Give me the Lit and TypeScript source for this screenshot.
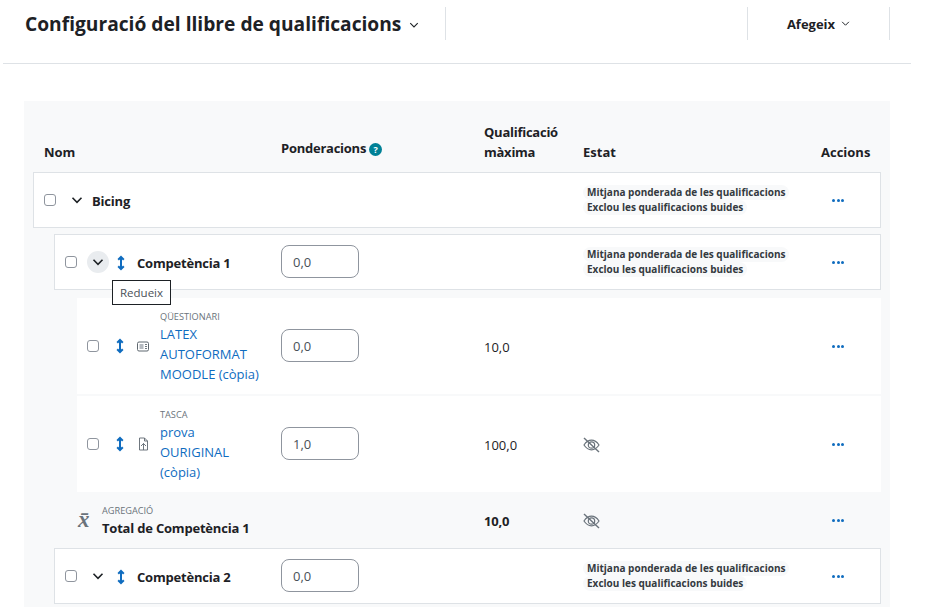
import { LitElement, html, css, svg } from "lit";
import { customElement } from "lit/decorators.js";

const chevron = (size: number, width = 1.6) => html`<svg class="chev" width=${size} height=${size} viewBox="0 0 12 12" fill="none" stroke="currentColor" stroke-width=${width}><path d="M1.5 3.8 6 8.3l4.5-4.5"/></svg>`;

const moveIcon = html`<svg class="move" width="16" height="16" viewBox="0 0 16 16" fill="none" stroke="#0f6cbf" stroke-width="2"><path d="M8 2.500v11M5.200 4.800 8 2l2.800 2.800M5.200 11.200 8 14l2.800-2.800"/></svg>`;

const eyeSlash = html`<svg width="17" height="16" viewBox="0 0 17 16" fill="none" stroke="#6a737b" stroke-width="1.2"><path d="M1 8c2-3 4.500-4.800 7.500-4.800S14 5 16 8c-2 3-4.500 4.800-7.500 4.800S3 11 1 8z"/><circle cx="8.500" cy="8" r="3.200"/><path d="M1 1 16 15" stroke-width="1.400"/></svg>`;

const quizIcon = html`<svg width="12" height="11" viewBox="0 0 12 11" fill="none" stroke="#5f6870"><rect x=".5" y="1" width="11" height="9" rx="1.500"/>${svg`<path d="M2.500 3h4v5h-4z" fill="#b5bac0" stroke="none"/><path d="M8 3.500h2M8 5.500h2M8 7.500h2" stroke-width=".9"/>`}</svg>`;

const assignIcon = html`<svg width="11" height="14" viewBox="0 0 11 14" fill="none" stroke="#5f6870" stroke-width=".9"><path d="M1.500 1h5l3 3v9h-8zM6.500 1v3h3M5.500 13V6.500M3 9l2.500-2.500L8 9"/></svg>`;

const pills = html`<div class="pills"><span>Mitjana ponderada de les qualificacions</span><span>Exclou les qualificacions buides</span></div>`;

@customElement("app-root")
export class AppRoot extends LitElement {
  static styles = css`
    :host {
      display: flex;
      flex-direction: column;
      height: 100vh;
      overflow: hidden;
      background: #fff;
      color: #1d2125;
      font-family: "Open Sans", "Noto Sans", sans-serif;
      font-size: 13px;
    }
    .top {
      display: flex;
      flex: none;
      align-items: center;
      height: 47px;
      margin: 0 14px 0 3px;
      padding: 0 21px 16px 22px;
      border-bottom: 1px solid #dee2e6;
    }
    .title {
      font-size: 19.200px;
      font-weight: 700;
      white-space: nowrap;
    }
    .title-chev {
      margin-left: 8px;
      margin-top: 3px;
    }
    .title-wrap {
      display: flex;
      align-items: center;
      width: 420px;
      height: 33px;
      border-right: 1px solid #dee2e6;
    }
    .add {
      display: flex;
      align-items: center;
      justify-content: center;
      gap: 6px;
      width: 141px;
      height: 33px;
      margin-left: auto;
      border-left: 1px solid #dee2e6;
      border-right: 1px solid #dee2e6;
      font-weight: 700;
      font-size: 13px;
    }
    .panel {
      flex: 1;
      min-height: 0;
      margin: 37px 35px 0 24px;
      padding: 21px 9px 0;
      background: #f8f9fa;
    }
    .row {
      display: grid;
      grid-template-columns: 1fr 203px 99px 238px 60px;
      align-items: center;
    }
    .head {
      align-items: end;
      padding: 0 0 10px 11px;
      font-weight: 700;
      line-height: 20px;
    }
    .head .weight {
      display: flex;
      align-items: center;
      gap: 3px;
      margin-bottom: 4px;
      letter-spacing: -0.25px;
    }
    .head .max {
      letter-spacing: -0.25px;
    }
    .help {
      display: inline-block;
      width: 13px;
      height: 13px;
      margin-top: 3px;
      border-radius: 50%;
      background: #008196;
      color: #fff;
      font-size: 9px;
      font-weight: 700;
      line-height: 13px;
      text-align: center;
    }
    .box {
      height: 56px;
      margin-bottom: 6px;
      background: #fff;
      box-shadow: inset 0 0 0 1px #dee2e6;
    }
    .lvl2 {
      margin-left: 21px;
    }
    .items {
      margin: 8px 0 0 44px;
    }
    .item {
      height: 96px;
      margin-bottom: 2px;
      background: #fff;
    }
    .item.end {
      margin-bottom: 0;
    }
    .agg {
      height: 56px;
      margin-left: 44px;
    }
    .name {
      display: flex;
      align-items: center;
      padding-left: 11px;
    }
    .item .name {
      padding-left: 10px;
    }
    .cb {
      flex: none;
      width: 12px;
      height: 12px;
      border: 1px solid #8f959e;
      border-radius: 3px;
      box-sizing: border-box;
      background: #fff;
    }
    .toggle {
      position: relative;
      display: flex;
      flex: none;
      align-items: center;
      justify-content: center;
      width: 22px;
      height: 22px;
      margin-left: 10px;
      border-radius: 50%;
    }
    .toggle.on {
      background: #e9ecef;
    }
    .tip {
      position: absolute;
      top: 29px;
      left: 25px;
      padding: 0 7px;
      border: 1px solid #1d2125;
      background: #fff;
      color: #495057;
      font-size: 11.500px;
      line-height: 23px;
      white-space: nowrap;
    }
    .move {
      flex: none;
      margin-top: 2px;
    }
    .box .move {
      margin-left: 4px;
    }
    .item .move {
      margin-left: 13px;
      margin-top: 0;
    }
    .bold {
      font-weight: 700;
      letter-spacing: -0.2px;
    }
    .cat-name {
      margin-left: 4px;
      padding-top: 2px;
    }
    .box .sub {
      margin-left: 8px;
      padding-top: 2px;
    }
    .kind {
      display: flex;
      flex: none;
      justify-content: center;
      width: 12px;
      margin-left: 9px;
    }
    .text {
      margin-left: 11px;
      width: 106px;
      padding-top: 2px;
    }
    .label {
      color: #6a737b;
      font-size: 9.200px;
      line-height: 14px;
      text-transform: uppercase;
    }
    a {
      display: block;
      color: #0f6cbf;
      line-height: 20px;
      text-decoration: none;
    }
    .value {
      padding-top: 2px;
    }
    input {
      display: block;
      width: 78px;
      height: 33px;
      margin-bottom: 2px;
      padding: 2px 11px 0;
      border: 1px solid #8f959e;
      border-radius: 8px;
      box-sizing: border-box;
      color: #495057;
      background: #fff;
      font: inherit;
      outline: none;
    }
    .xbar {
      width: 14px;
      margin-left: -10px;
      color: #6a737b;
      font-family: "Liberation Serif", serif;
      font-size: 23px;
      font-style: italic;
      font-weight: 700;
    }
    .agg .label {
      line-height: 15px;
    }
    .agg .text {
      width: auto;
      margin-left: 10px;
      white-space: nowrap;
    }
    .agg .text .bold {
      line-height: 21px;
    }
    .pills {
      display: flex;
      flex-direction: column;
      align-items: flex-start;
      margin-top: -1px;
      color: #343a40;
      font-size: 10px;
      font-weight: 700;
      line-height: 15px;
    }
    .pills span {
      padding: 0 4px;
      border-radius: 8px;
      background: #f8f9fa;
    }
    .eye {
      display: flex;
      padding-top: 2px;
    }
    .dots {
      display: flex;
      gap: 1.500px;
      margin-left: 11px;
    }
    .dots i {
      width: 3px;
      height: 3px;
      border-radius: 50%;
      background: #0f6cbf;
    }
  `;

  dots() {
    return html`<div class="dots"><i></i><i></i><i></i></div>`;
  }

  grade(value: string) {
    return html`<div><input type="text" readonly .value=${value} /></div>`;
  }

  item(kind: string, title: string, icon: unknown, weight: string, max: string, hidden: boolean, end = false) {
    return html`
      <div class="row item ${end ? "end" : ""}">
        <div class="name">
          <div class="cb"></div>
          ${moveIcon}
          <div class="kind">${icon}</div>
          <div class="text">
            <div class="label">${kind}</div>
            <a href="#">${title}</a>
          </div>
        </div>
        ${this.grade(weight)}
        <div class="value">${max}</div>
        <div class="eye">${hidden ? eyeSlash : ""}</div>
        ${this.dots()}
      </div>
    `;
  }

  render() {
    return html`
      <div class="top">
        <div class="title-wrap">
          <span class="title">Configuració del llibre de qualificacions</span>
          <span class="title-chev">${chevron(10, 1.3)}</span>
        </div>
        <div class="add">Afegeix ${chevron(9, 1.3)}</div>
      </div>
      <div class="panel">
        <div class="row head">
          <div>Nom</div>
          <div class="weight">Ponderacions <span class="help">?</span></div>
          <div class="max">Qualificació<br />màxima</div>
          <div>Estat</div>
          <div>Accions</div>
        </div>
        <div class="row box">
          <div class="name">
            <div class="cb"></div>
            <div class="toggle">${chevron(12)}</div>
            <div class="bold cat-name">Bicing</div>
          </div>
          <div></div>
          <div></div>
          ${pills} ${this.dots()}
        </div>
        <div class="row box lvl2">
          <div class="name">
            <div class="cb"></div>
            <div class="toggle on">${chevron(12)}<div class="tip">Redueix</div></div>
            ${moveIcon}
            <div class="bold sub">Competència 1</div>
          </div>
          ${this.grade("0,0")}
          <div></div>
          ${pills} ${this.dots()}
        </div>
        <div class="items">
          ${this.item("Qüestionari", "LATEX AUTOFORMAT MOODLE (còpia)", quizIcon, "0,0", "10,0", false)}
          ${this.item("Tasca", "prova OURIGINAL (còpia)", assignIcon, "1,0", "100,0", true, true)}
        </div>
        <div class="row agg">
          <div class="name">
            <div class="xbar">x̄</div>
            <div class="text">
              <div class="label">Agregació</div>
              <div class="bold">Total de Competència 1</div>
            </div>
          </div>
          <div></div>
          <div class="bold value">10,0</div>
          <div class="eye">${eyeSlash}</div>
          ${this.dots()}
        </div>
        <div class="row box lvl2">
          <div class="name">
            <div class="cb"></div>
            <div class="toggle">${chevron(12)}</div>
            ${moveIcon}
            <div class="bold sub">Competència 2</div>
          </div>
          ${this.grade("0,0")}
          <div></div>
          ${pills} ${this.dots()}
        </div>
      </div>
    `;
  }
}
